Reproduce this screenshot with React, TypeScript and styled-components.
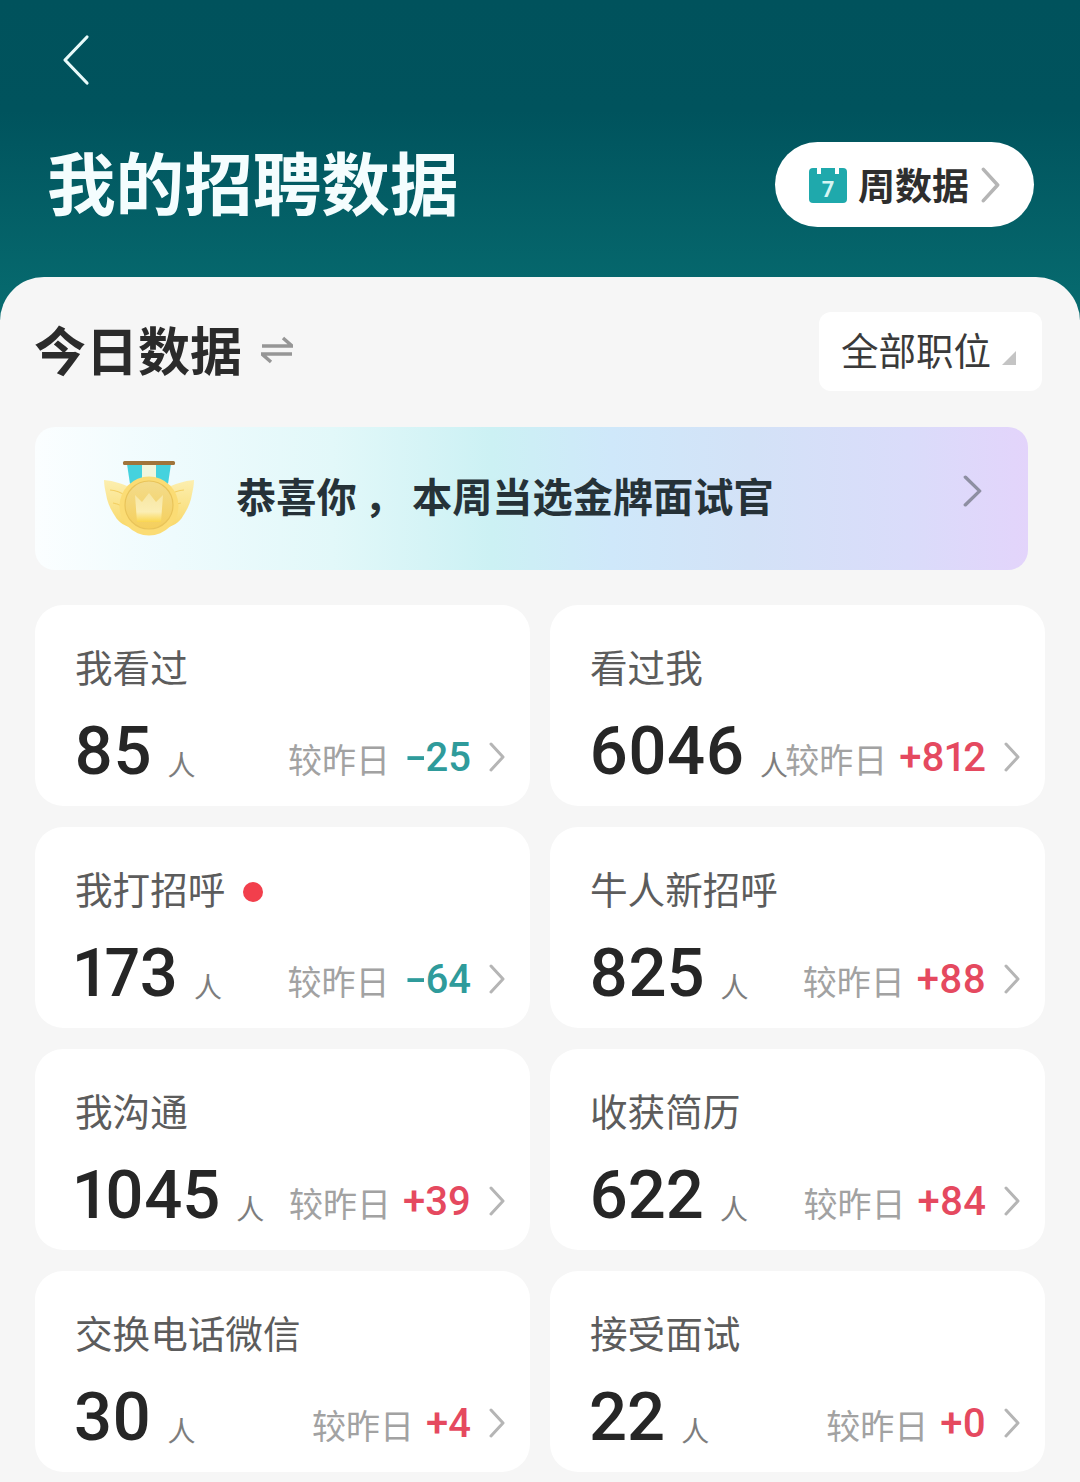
import React from "react";
import styled, { createGlobalStyle } from "styled-components";

const Global = createGlobalStyle`
  html, body { margin: 0; padding: 0; background: #f6f6f6; }
  body { font-family: "Noto Sans CJK SC", "Noto Sans", sans-serif; }
  * { box-sizing: border-box; }
`;

const Page = styled.div`
  width: 1080px;
  height: 1482px;
  overflow: hidden;
  background: linear-gradient(180deg, #00525c 0px, #00535d 110px, #076c70 320px) no-repeat;
  background-size: 100% 320px;
  background-color: #f6f6f6;
`;

const Header = styled.header`
  height: 277px;
  padding: 34px 46px 0 47px;
  display: flex;
  flex-direction: column;
`;

const BackIcon = styled.svg`
  width: 30px;
  height: 52px;
  margin-left: 15px;
  flex: none;
`;

const TitleRow = styled.div`
  display: flex;
  align-items: center;
  justify-content: space-between;
  margin-top: 56px;
`;

const Title = styled.h1`
  margin: -8px 0 0;
  font-size: 68.6px;
  line-height: 85px;
  font-weight: 700;
  color: #f4fdfe;
`;

const WeekPill = styled.button`
  width: 259px;
  height: 85px;
  border: 0;
  padding: 0 0 0 34px;
  border-radius: 43px;
  background: #fff;
  display: flex;
  align-items: center;
  font: inherit;
`;

const WeekText = styled.span`
  margin: -2px 0 0 11px;
  font-size: 37px;
  line-height: 44px;
  font-weight: 700;
  color: #2e2e2e;
`;

const Sheet = styled.main`
  height: 1205px;
  background: #f6f6f6;
  border-radius: 44px 44px 0 0;
  padding: 35px 35px 0;
`;

const SheetHead = styled.div`
  height: 79px;
  display: flex;
  align-items: center;
`;

const SheetTitle = styled.h2`
  margin: -6px 0 0 -1px;
  font-size: 52px;
  line-height: 79px;
  font-weight: 700;
  color: #2b2b2b;
`;

const SwapIcon = styled.svg`
  width: 32px;
  height: 28px;
  margin: -4px 0 0 19px;
  flex: none;
`;

const JobSelect = styled.div`
  width: 223px;
  height: 79px;
  margin: 0 3px 0 auto;
  padding: 0 0 6px 22px;
  border-radius: 12px;
  background: #fff;
  display: flex;
  align-items: center;
  font-size: 37.5px;
  color: #3a3a3a;
  position: relative;
`;

const Corner = styled.i`
  position: absolute;
  right: 26px;
  bottom: 26px;
  width: 0;
  height: 0;
  border-style: solid;
  border-width: 0 0 14px 14px;
  border-color: transparent transparent #c4c4c4 transparent;
`;

const Banner = styled.section`
  width: 993px;
  height: 143px;
  margin-top: 36px;
  border-radius: 20px;
  background: linear-gradient(90deg, #fbfeff 0%, #eefbfd 14%, #e2f8f9 30%, #ccf1f4 46%, #cfe8fa 58%, #d3e2f7 72%, #dadcfa 88%, #e3d4fb 100%);
  padding: 0 46px 0 69px;
  display: flex;
  align-items: center;
`;

const BannerText = styled.span`
  margin: -8px 0 0 41px;
  font-size: 40.2px;
  line-height: 50px;
  font-weight: 700;
  color: #263238;
  white-space: pre;
  word-spacing: -1.5px;
  flex: 1;
`;

const Grid = styled.div`
  display: grid;
  grid-template-columns: 495px 495px;
  grid-auto-rows: 201px;
  column-gap: 20px;
  row-gap: 21px;
  margin-top: 35px;
`;

const Card = styled.article`
  background: #fff;
  border-radius: 28px;
  padding: 36px 25px 0 40px;
  display: flex;
  flex-direction: column;
`;

const CardLabel = styled.div`
  height: 50px;
  display: flex;
  align-items: center;
  font-size: 37.6px;
  line-height: 50px;
  color: #5c5c5c;
`;

const RedDot = styled.i`
  width: 20px;
  height: 20px;
  margin: 7px 0 0 18px;
  border-radius: 50%;
  background: #f23f4c;
`;

const StatRow = styled.div`
  display: flex;
  align-items: flex-end;
  justify-content: space-between;
  margin-top: 25px;
  height: 70px;
`;

const Figure = styled.div`
  display: flex;
  align-items: flex-end;
  flex: none;
`;

const Value = styled.span`
  margin-left: -1px;
  font-family: Roboto, sans-serif;
  font-size: 67px;
  line-height: 70px;
  font-weight: 500;
  font-variant-numeric: proportional-nums;
  color: #262626;
`;

const Unit = styled.span`
  margin: 0 0 7px 16px;
  font-size: 28px;
  line-height: 30px;
  color: #7d7d7d;
`;

const Compare = styled.div`
  display: flex;
  align-items: center;
  height: 60px;
  margin: 0 0 -1px -4px;
  flex: none;
`;

const CompareLabel = styled.span`
  font-size: 34px;
  line-height: 40px;
  color: #a2a2a2;
  margin-top: 4px;
  white-space: nowrap;
`;

const Delta = styled.span<{ $tone: "up" | "down" }>`
  margin: 2px 0 0 ${(p) => (p.$tone === "up" ? "12px" : "16px")};
  font-family: Roboto, sans-serif;
  font-size: 40px;
  line-height: 44px;
  font-weight: 500;
  font-variant-numeric: proportional-nums;
  white-space: nowrap;
  color: ${(p) => (p.$tone === "up" ? "#e5495f" : "#2f9b9b")};
`;

const Sign = styled.span`
  display: inline-block;
  transform: scaleX(1.6);
  margin: 0 3px 0 3px;
`;

const Chevron = styled.svg`
  width: 16px;
  height: 30px;
  margin-left: 18px;
  flex: none;
`;

const BannerChevron = styled(Chevron)`
  width: 19px;
  height: 32px;
  margin: -16px 0 0 0;
`;

const PillChevron = styled(Chevron)`
  width: 19px;
  height: 36px;
  margin-left: 12px;
`;

const ChevronGlyph = ({ as: Comp = Chevron, color = "#b5b5b5" }: { as?: typeof Chevron; color?: string }) => (
  <Comp viewBox="0 0 16 30" preserveAspectRatio="none" fill="none" stroke={color} strokeWidth="3" strokeLinecap="round" strokeLinejoin="round">
    <path d="M2 2 L14 15 L2 28" />
  </Comp>
);

const MedalArt = styled.svg`
  flex: none;
  filter: blur(0.7px);
`;

const Medal = () => (
  <MedalArt width="91" height="78" viewBox="0 0 91 78">
    <defs>
      <linearGradient id="gold" x1="0" y1="0" x2="0" y2="1">
        <stop offset="0" stopColor="#fcefb0" />
        <stop offset="1" stopColor="#f9d868" />
      </linearGradient>
      <linearGradient id="coin" x1="0" y1="0" x2="0" y2="1">
        <stop offset="0" stopColor="#f3dc8c" />
        <stop offset="1" stopColor="#f5cf5c" />
      </linearGradient>
      <linearGradient id="crown" x1="0" y1="0" x2="0" y2="1">
        <stop offset="0" stopColor="#f6e6a4" />
        <stop offset="0.65" stopColor="#fbeeb4" />
        <stop offset="1" stopColor="#fad650" />
      </linearGradient>
    </defs>
    <path d="M23 4 H38 V18 L26 24 Z" fill="#45d2de" />
    <path d="M67 4 H52 V18 L64 24 Z" fill="#45d2de" />
    <rect x="38" y="4" width="14" height="14" fill="#f1f6dc" />
    <rect x="19" y="1" width="52" height="4" rx="1.5" fill="#a0743a" />
    <path d="M0 20 C10 21 20 24 27 28 L29 68 C22 67 14 62 11 56 C7 50 3 42 2 34 C1 29 0 25 0 20 Z" fill="url(#gold)" />
    <path d="M90 20 C80 21 70 24 63 28 L61 68 C68 67 76 62 79 56 C83 50 87 42 88 34 C89 29 90 25 90 20 Z" fill="url(#gold)" />
    <path d="M6 30 C12 30 18 33 24 37 M9 43 C14 44 19 46 24 50 M62 37 C68 33 74 30 80 30 M62 50 C67 46 72 44 77 43" fill="none" stroke="#f3cf63" strokeWidth="1.2" />
    <circle cx="45" cy="46" r="29.5" fill="#fbdc74" />
    <circle cx="45" cy="45" r="24" fill="url(#coin)" stroke="#e9c45a" strokeWidth="1.2" />
    <path d="M31 35 L38 42 L45 33 L52 42 L59 35 L57 62 H33 Z" fill="url(#crown)" />
  </MedalArt>
);

const CalendarIcon = () => (
  <svg width="38" height="36" viewBox="0 0 38 36" style={{ flex: "none" }}>
    <rect x="0" y="1" width="38" height="35" rx="4" fill="#1fa9ac" />
    <rect x="8" y="0" width="4" height="7" fill="#fff" />
    <rect x="26" y="0" width="4" height="7" fill="#fff" />
    <text x="19" y="30" textAnchor="middle" fontFamily="Roboto, sans-serif" fontWeight="700" fontSize="22" fill="#d5f5f3">7</text>
  </svg>
);

type Stat = {
  label: string;
  value: string;
  delta: string;
  tone: "up" | "down";
  dot?: boolean;
};

const stats: Stat[] = [
  { label: "我看过", value: "85", delta: "-25", tone: "down" },
  { label: "看过我", value: "6046", delta: "+812", tone: "up" },
  { label: "我打招呼", value: "173", delta: "-64", tone: "down", dot: true },
  { label: "牛人新招呼", value: "825", delta: "+88", tone: "up" },
  { label: "我沟通", value: "1045", delta: "+39", tone: "up" },
  { label: "收获简历", value: "622", delta: "+84", tone: "up" },
  { label: "交换电话微信", value: "30", delta: "+4", tone: "up" },
  { label: "接受面试", value: "22", delta: "+0", tone: "up" },
];

export default function App() {
  return (
    <Page>
      <Global />
      <Header>
        <BackIcon viewBox="0 0 30 52" fill="none" stroke="#e8fafa" strokeWidth="3.2" strokeLinecap="round" strokeLinejoin="round">
          <path d="M25 3 L3 26 L25 49" />
        </BackIcon>
        <TitleRow>
          <Title>我的招聘数据</Title>
          <WeekPill>
            <CalendarIcon />
            <WeekText>周数据</WeekText>
            <ChevronGlyph as={PillChevron} />
          </WeekPill>
        </TitleRow>
      </Header>
      <Sheet>
        <SheetHead>
          <SheetTitle>今日数据</SheetTitle>
          <SwapIcon viewBox="0 0 32 28" fill="none" stroke="#969696" strokeWidth="3.4">
            <path d="M1 10 H31 L22 2" />
            <path d="M31 18 H1 L10 26" />
          </SwapIcon>
          <JobSelect>
            全部职位
            <Corner />
          </JobSelect>
        </SheetHead>
        <Banner>
          <Medal />
          <BannerText>恭喜你 ， 本周当选金牌面试官</BannerText>
          <ChevronGlyph as={BannerChevron} color="#8e8fa2" />
        </Banner>
        <Grid>
          {stats.map((s) => (
            <Card key={s.label}>
              <CardLabel>
                {s.label}
                {s.dot && <RedDot />}
              </CardLabel>
              <StatRow>
                <Figure>
                  <Value>{s.value}</Value>
                  <Unit>人</Unit>
                </Figure>
                <Compare>
                  <CompareLabel>较昨日</CompareLabel>
                  <Delta $tone={s.tone}>
                    {s.tone === "down" ? <Sign>-</Sign> : s.delta[0]}
                    {s.delta.slice(1)}
                  </Delta>
                  <ChevronGlyph />
                </Compare>
              </StatRow>
            </Card>
          ))}
        </Grid>
      </Sheet>
    </Page>
  );
}
